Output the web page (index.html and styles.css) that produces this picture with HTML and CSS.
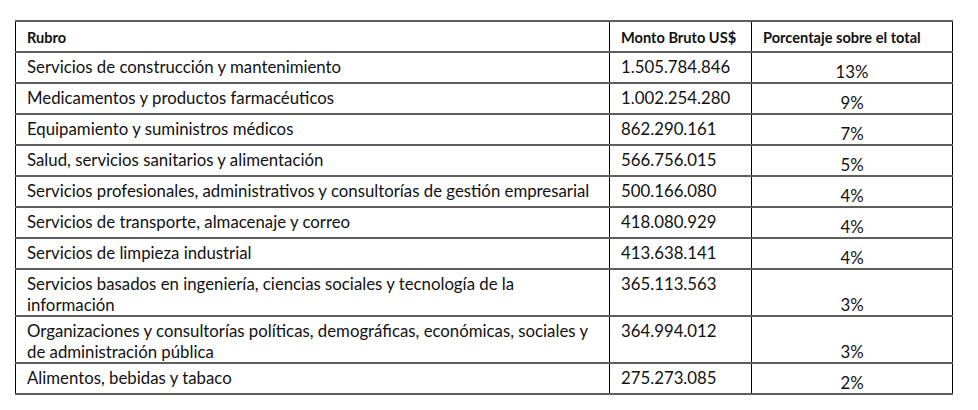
FILE: index.html
```html
<!DOCTYPE html>
<html lang="es">
<head>
<meta charset="utf-8">
<link rel="stylesheet" href="styles.css">
</head>
<body>
<table class="tbl">
  <colgroup>
    <col class="c1"><col class="c2"><col class="c3">
  </colgroup>
  <thead>
    <tr class="row"><th>Rubro</th><th>Monto Bruto US$</th><th>Porcentaje sobre el total</th></tr>
  </thead>
  <tbody>
    <tr class="row"><td>Servicios de construcción y mantenimiento</td><td>1.505.784.846</td><td class="pct">13%</td></tr>
    <tr class="row"><td>Medicamentos y productos farmacéuticos</td><td>1.002.254.280</td><td class="pct">9%</td></tr>
    <tr class="row"><td>Equipamiento y suministros médicos</td><td>862.290.161</td><td class="pct">7%</td></tr>
    <tr class="row"><td>Salud, servicios sanitarios y alimentación</td><td>566.756.015</td><td class="pct">5%</td></tr>
    <tr class="row"><td>Servicios profesionales, administrativos y consultorías de gestión empresarial</td><td>500.166.080</td><td class="pct">4%</td></tr>
    <tr class="row"><td>Servicios de transporte, almacenaje y correo</td><td>418.080.929</td><td class="pct">4%</td></tr>
    <tr class="row"><td>Servicios de limpieza industrial</td><td>413.638.141</td><td class="pct">4%</td></tr>
    <tr class="row2"><td>Servicios basados en ingeniería, ciencias sociales y tecnología de la<br>información</td><td>365.113.563</td><td class="pct">3%</td></tr>
    <tr class="row2"><td>Organizaciones y consultorías políticas, demográficas, económicas, sociales y<br>de administración pública</td><td>364.994.012</td><td class="pct">3%</td></tr>
    <tr class="row last"><td>Alimentos, bebidas y tabaco</td><td>275.273.085</td><td class="pct">2%</td></tr>
  </tbody>
</table>
</body>
</html>
```
FILE: styles.css
```css
html, body { margin: 0; padding: 0; background: #fff; }
body { padding: 20px 0 0 15px; font-family: "Lato", "Liberation Sans", sans-serif; color: #111; }
.tbl {
  border-collapse: collapse;
  table-layout: fixed;
  width: 937px;
  border-left: 1px solid #000;
  border-right: 1px solid #000;
}
.c1 { width: 594px; }
.c2 { width: 142px; }
.c3 { width: 201px; }
.tbl th, .tbl td {
  border-top: 2px solid #5e5e5e;
  border-bottom: 2px solid #5e5e5e;
  border-left: 1px solid #000;
  border-right: 1px solid #000;
  padding: 0 0 0 11px;
  vertical-align: top;
  text-align: left;
  font-size: 16.8px;
  line-height: 21px;
  font-weight: 400;
  white-space: nowrap;
}
.tbl th { font-weight: 700; font-size: 14.6px; padding-top: 5px; }
.row td, .row th { height: 31px; box-sizing: border-box; }
.row td { padding-top: 3px; }
.row2 td { height: 45px; box-sizing: border-box; padding-top: 3px; }
.tbl td.pct { vertical-align: bottom; text-align: center; padding-left: 0; padding-top: 0; padding-bottom: 0; }
```
